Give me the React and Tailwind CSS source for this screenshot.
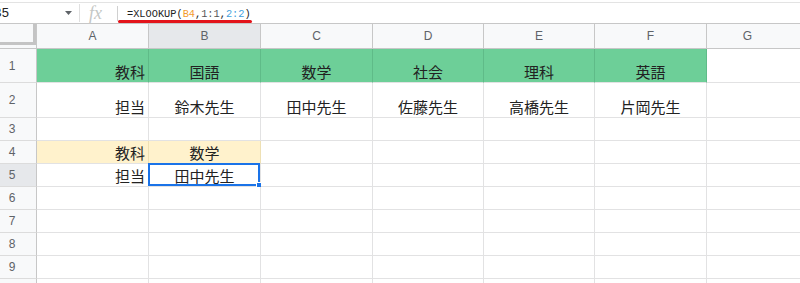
import React from "react";

const COLS = [
  { l: "A", w: "w-[112px]" },
  { l: "B", w: "w-[112px]" },
  { l: "C", w: "w-[112px]" },
  { l: "D", w: "w-[111px]" },
  { l: "E", w: "w-[111px]" },
  { l: "F", w: "w-[112px]" },
];

const ROWS = [
  {
    n: "1",
    h: "h-[34px]",
    cells: [
      { t: "教科", a: "r", bg: "green" },
      { t: "国語", bg: "green" },
      { t: "数学", bg: "green" },
      { t: "社会", bg: "green" },
      { t: "理科", bg: "green" },
      { t: "英語", bg: "green" },
    ],
  },
  {
    n: "2",
    h: "h-[35px]",
    cells: [
      { t: "担当", a: "r" },
      { t: "鈴木先生" },
      { t: "田中先生" },
      { t: "佐藤先生" },
      { t: "高橋先生" },
      { t: "片岡先生" },
    ],
  },
  { n: "3", h: "h-[23px]", cells: [] },
  {
    n: "4",
    h: "h-[23px]",
    cells: [
      { t: "教科", a: "r", bg: "yellow" },
      { t: "数学", bg: "yellow" },
    ],
  },
  {
    n: "5",
    h: "h-[23px]",
    sel: true,
    cells: [{ t: "担当", a: "r" }, { t: "田中先生", selected: true }],
  },
  { n: "6", h: "h-[23px]", cells: [] },
  { n: "7", h: "h-[23px]", cells: [] },
  { n: "8", h: "h-[23px]", cells: [] },
  { n: "9", h: "h-[23px]", cells: [] },
  { n: "10", h: "h-[23px]", cells: [] },
];

function Cell({ col, cell }) {
  const c = cell || {};
  let bg = "bg-white border-[#e2e2e3]";
  if (c.bg === "green") bg = "bg-[#6dcf98] border-r-[#5fbb88] border-b-[#e2e2e3]";
  if (c.bg === "yellow") bg = "bg-[#fff2cc] border-r-[#eee0b4] border-b-[#e2e2e3]";
  const align = c.a === "r" ? "justify-end pr-[3px]" : "justify-center";
  return (
    <div
      className={`${col.w} shrink-0 h-full border-r border-b ${bg} flex items-end ${align} pb-[1px] relative`}
    >
      {c.t && (
        <span className="text-[15px] leading-[18px] text-[#222222] font-['Noto_Sans_CJK_JP','Noto_Sans',sans-serif] whitespace-nowrap">
          {c.t}
        </span>
      )}
      {c.selected && (
        <>
          <div className="absolute top-[-1px] left-[-1px] right-0 bottom-0 border-2 border-[#1a73e8]" />
          <div className="absolute right-[-3px] bottom-[-3px] w-[7px] h-[7px] bg-[#1a73e8] border border-white" />
        </>
      )}
    </div>
  );
}

export default function App() {
  return (
    <div className="w-[800px] h-[283px] overflow-hidden bg-white relative font-['Liberation_Sans',Arial,sans-serif]">
      <div className="h-[2px] bg-white" />
      {/* formula bar */}
      <div className="h-[21px] border-t border-[#e3e3e3] flex items-center relative">
        <div className="w-[79px] h-full flex items-center shrink-0">
          <span className="ml-[-7px] text-[13px] text-[#222222]">B5</span>
          <svg className="ml-auto mr-[7px]" width="7" height="4" viewBox="0 0 7 4">
            <path d="M0 0 L7 0 L3.5 4 Z" fill="#5f6368" />
          </svg>
        </div>
        <div className="w-px h-[18px] bg-[#e0e0e0] shrink-0" />
        <div className="w-[37px] h-full flex items-center shrink-0">
          <span className="ml-[9px] text-[18px] leading-[18px] italic text-[#c4c7c5] font-['Liberation_Serif',serif]">
            fx
          </span>
        </div>
        <div className="w-px h-[15px] bg-[#d0d0d0] shrink-0" />
        <div className="ml-[9px] text-[10.3px] leading-[14px] font-['Liberation_Mono',monospace] text-[#222222] whitespace-nowrap pt-[1px]">
          =XLOOKUP(<span className="text-[#f29b2f]">B4</span>,
          <span className="text-[#555555]">1:1</span>,
          <span className="text-[#3fa0dc]">2:2</span>)
        </div>
        <div className="absolute left-[118px] top-[17px] w-[134px] h-[3px] rounded-full bg-[#e3141b]" />
      </div>

      {/* column header */}
      <div className="flex h-[26px] border-t border-b border-[#c7c7c7] bg-[#f8f9fa]">
        <div className="w-[37px] shrink-0 h-full border-r border-[#c7c7c7]">
          <div className="h-[21px] w-full border-b-[3px] border-r-[3px] border-[#c4c4c4] bg-[#f8f9fa]" />
        </div>
        {COLS.map((c) => (
          <div
            key={c.l}
            className={`${c.w} shrink-0 h-full border-r border-[#c7c7c7] flex items-center justify-center text-[12px] text-[#5f6368] ${
              c.l === "B" ? "bg-[#e6e8eb]" : ""
            }`}
          >
            {c.l}
          </div>
        ))}
        <div className="flex-1 h-full flex items-center justify-center text-[12px] text-[#5f6368] pr-[12px]">
          G
        </div>
      </div>

      {/* rows */}
      {ROWS.map((r) => (
        <div key={r.n} className={`flex ${r.h}`}>
          <div
            className={`w-[37px] shrink-0 h-full border-r border-r-[#c7c7c7] border-b border-b-[#dcdcdc] flex items-center ${
              r.sel ? "bg-[#e6e8eb]" : "bg-[#f8f9fa]"
            }`}
          >
            <span className="w-[24px] text-center text-[12px] text-[#5f6368]">{r.n}</span>
          </div>
          {COLS.map((c, i) => (
            <Cell key={c.l} col={c} cell={r.cells[i]} />
          ))}
          <div className="flex-1 h-full border-b border-[#e2e2e3] bg-white" />
        </div>
      ))}
    </div>
  );
}
